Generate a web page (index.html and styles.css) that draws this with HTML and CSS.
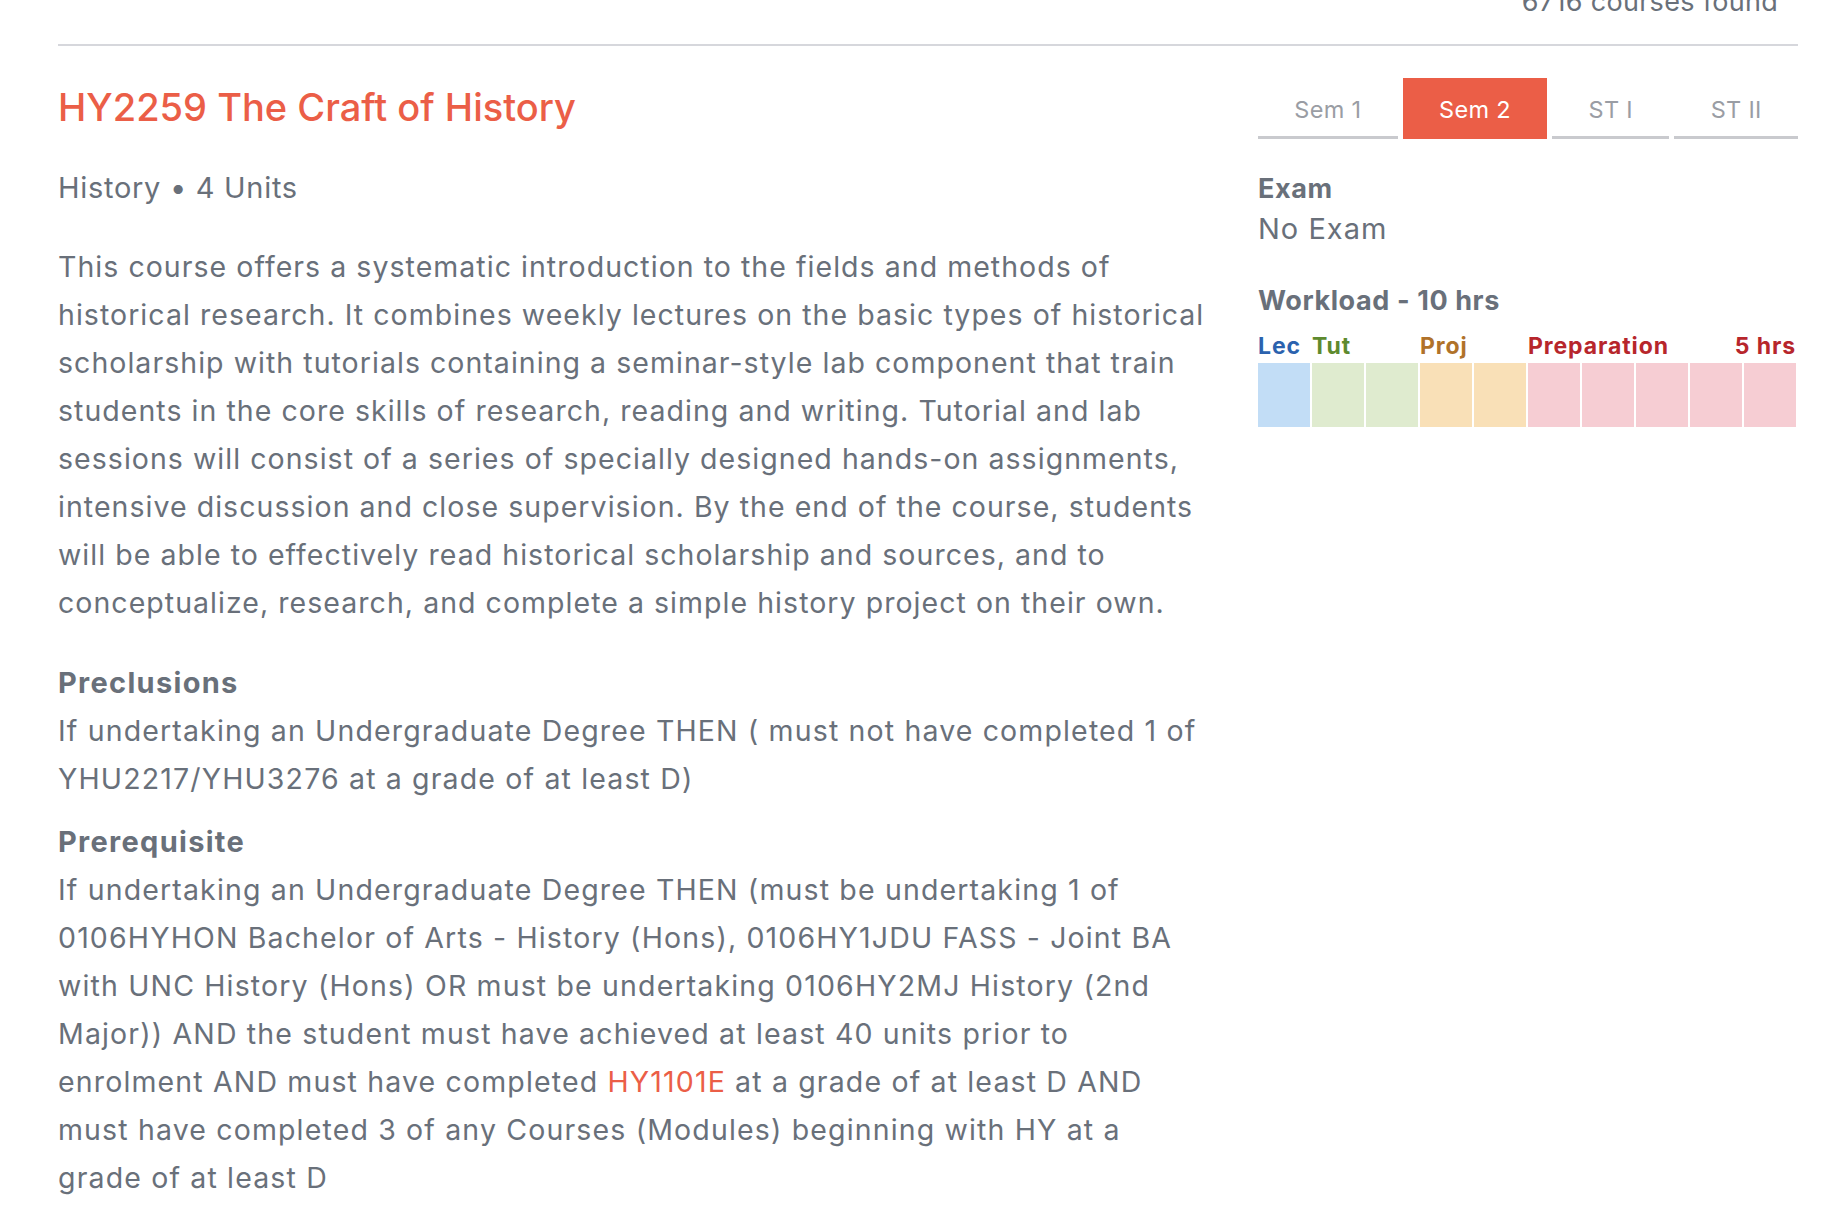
FILE: index.html
```html
<!DOCTYPE html>
<html lang="en">
<head>
<meta charset="utf-8">
<title>HY2259 The Craft of History</title>
<link rel="stylesheet" href="styles.css">
</head>
<body>
<div class="topbar">
  <div class="count">6716 courses found</div>
</div>
<main class="course">
  <section class="details">
    <h1 class="title">HY2259 The Craft of History</h1>
    <p class="meta">History • 4 Units</p>
    <p class="desc">This course offers a systematic introduction to the fields and methods of historical research. It combines weekly lectures on the basic types of historical scholarship with tutorials containing a seminar-style lab component that train students in the core skills of research, reading and writing. Tutorial and lab sessions will consist of a series of specially designed hands-on assignments, intensive discussion and close supervision. By the end of the course, students will be able to effectively read historical scholarship and sources, and to conceptualize, research, and complete a simple history project on their own.</p>
    <h2 class="heading first">Preclusions</h2>
    <p class="req">If undertaking an Undergraduate Degree THEN ( must not have completed 1 of YHU2217/YHU3276 at a grade of at least D)</p>
    <h2 class="heading">Prerequisite</h2>
    <p class="req">If undertaking an Undergraduate Degree THEN (must be undertaking 1 of 0106HYHON Bachelor of Arts - History (Hons), 0106HY1JDU FASS - Joint BA with UNC History (Hons) OR must be undertaking 0106HY2MJ History (2nd Major)) AND the student must have achieved at least 40 units prior to enrolment AND must have completed <a class="link" href="#">HY1101E</a> at a grade of at least D AND must have completed 3 of any Courses (Modules) beginning with HY at a grade of at least D</p>
  </section>
  <aside class="side">
    <nav class="tabs">
      <button class="tab">Sem 1</button>
      <button class="tab active">Sem 2</button>
      <button class="tab">ST I</button>
      <button class="tab">ST II</button>
    </nav>
    <div class="label">Exam</div>
    <div class="value">No Exam</div>
    <div class="label workload-title">Workload - 10 hrs</div>
    <div class="workload">
      <div class="group">
        <div class="glabel lec">Lec</div>
        <div class="cells"><span class="cell lec-bg"></span></div>
      </div>
      <div class="group">
        <div class="glabel tut">Tut</div>
        <div class="cells"><span class="cell tut-bg"></span><span class="cell tut-bg"></span></div>
      </div>
      <div class="group">
        <div class="glabel proj">Proj</div>
        <div class="cells"><span class="cell proj-bg"></span><span class="cell proj-bg"></span></div>
      </div>
      <div class="group">
        <div class="glabel prep split"><span>Preparation</span><span>5 hrs</span></div>
        <div class="cells"><span class="cell prep-bg"></span><span class="cell prep-bg"></span><span class="cell prep-bg"></span><span class="cell prep-bg"></span><span class="cell prep-bg"></span></div>
      </div>
    </div>
  </aside>
</main>
</body>
</html>
```

FILE: styles.css
```css
* { box-sizing: border-box; }
html, body { margin: 0; padding: 0; background: #fff; }
body {
  font-family: Inter, "Noto Sans", "Liberation Sans", sans-serif;
  color: #69707a;
  overflow: hidden;
}
.topbar {
  margin: 0 30px 0 58px;
  height: 46px;
  border-bottom: 2px solid #d6d7dc;
  display: flex;
  justify-content: flex-end;
  align-items: flex-start;
}
.count {
  margin-top: -14px;
  margin-right: 20px;
  font-size: 27px;
  line-height: 32px;
  letter-spacing: 0.3px;
  color: #69707a;
}
.course {
  display: flex;
  gap: 50px;
  padding: 0 30px 0 58px;
}
.details { flex: 1; min-width: 0; }
.side { width: 540px; flex: none; padding-top: 32px; }

.title {
  margin: 37px 0 0;
  font-size: 38px;
  line-height: 48px;
  font-weight: 500;
  color: #eb5e47;
}
.meta {
  margin: 37px 0 0;
  font-size: 29px;
  line-height: 40px;
  letter-spacing: 0.7px;
}
.desc {
  margin: 35px 0 0;
  font-size: 28.5px;
  line-height: 48px;
  letter-spacing: 1.04px;
}
.heading {
  margin: 15px 0 0;
  font-size: 29px;
  line-height: 48px;
  font-weight: 700;
  letter-spacing: 1.3px;
}
.heading.first { margin-top: 32px; }
.req {
  margin: 0;
  font-size: 28.5px;
  line-height: 48px;
  letter-spacing: 1.15px;
}
.link { color: #eb5e47; text-decoration: none; }

.tabs {
  display: flex;
  gap: 5px;
}
.tab {
  flex: 1 1 auto;
  height: 61px;
  padding: 4px 30px 0;
  border: 0;
  border-bottom: 3px solid #c9cace;
  background: transparent;
  font-family: inherit;
  font-size: 23.5px;
  letter-spacing: 0.3px;
  color: #9a9da4;
}
.tab.active {
  background: #eb5e47;
  border-bottom-color: #eb5e47;
  color: #fff;
}
.label {
  margin-top: 32px;
  font-size: 27px;
  line-height: 36px;
  font-weight: 700;
  letter-spacing: 0.6px;
}
.value {
  font-size: 29px;
  line-height: 44px;
  letter-spacing: 1px;
}
.workload-title { margin-top: 32px; }
.workload {
  display: flex;
  gap: 2px;
  margin-top: 13px;
}
.group { display: flex; flex-direction: column; }
.glabel {
  font-size: 23px;
  line-height: 28px;
  font-weight: 700;
  letter-spacing: 0.9px;
  margin-bottom: 3px;
}
.split { display: flex; justify-content: space-between; }
.cells { display: flex; gap: 2px; }
.cell { display: block; width: 52px; height: 64px; }
.lec { color: #2b62ae; }
.tut { color: #5e8a2e; }
.proj { color: #b0722a; }
.prep { color: #b7262c; }
.lec-bg { background: #c2ddf6; }
.tut-bg { background: #dfebcf; }
.proj-bg { background: #f9e0b7; }
.prep-bg { background: #f6cdd3; }
```
